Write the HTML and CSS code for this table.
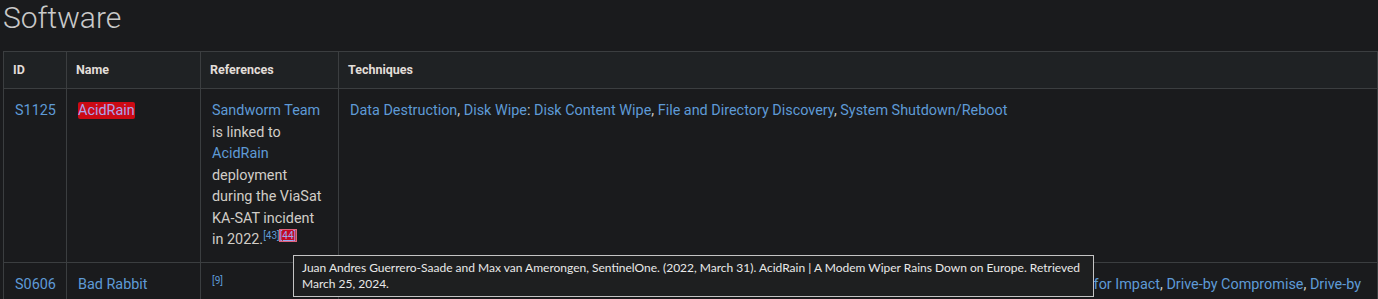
FILE: index.html
```html
<!DOCTYPE html>
<html lang="en">
<head>
<meta charset="utf-8">
<title>Software</title>
<link rel="stylesheet" href="styles.css">
</head>
<body>
<div class="page">
  <h2 class="section-title">Software</h2>
  <table class="software">
    <colgroup>
      <col class="c-id">
      <col class="c-name">
      <col class="c-refs">
      <col class="c-tech">
    </colgroup>
    <thead>
      <tr>
        <th>ID</th>
        <th>Name</th>
        <th>References</th>
        <th>Techniques</th>
      </tr>
    </thead>
    <tbody>
      <tr>
        <td><a href="#">S1125</a></td>
        <td><a href="#" class="hl">AcidRain</a></td>
        <td><a href="#">Sandworm Team</a> is linked to <a href="#">AcidRain</a> deployment during the ViaSat KA-SAT incident in 2022.<sup><a href="#">[43]</a></sup><sup><a href="#" class="ref-hl">[44]</a></sup></td>
        <td><a href="#">Data Destruction</a>, <a href="#">Disk Wipe</a>: <a href="#">Disk Content Wipe</a>, <a href="#">File and Directory Discovery</a>, <a href="#">System Shutdown/Reboot</a></td>
      </tr>
      <tr>
        <td><a href="#">S0606</a></td>
        <td><a href="#">Bad Rabbit</a></td>
        <td><sup><a href="#">[9]</a></sup></td>
        <td><a href="#">Boot or Logon Autostart Execution</a>, <a href="#">Brute Force</a>: <a href="#">Password Spraying</a>, <a href="#">Data Destruction</a>, <a href="#">Input Capture</a>, <a href="#">Data Encrypted for Impact</a>, <a href="#">Drive-by Compromise</a>, <a href="#">Drive-by Compromise</a>, <a href="#">Exploitation of Remote Services</a>, <a href="#">Lateral Tool Transfer</a></td>
      </tr>
    </tbody>
  </table>
  <div class="tooltip">Juan Andres Guerrero-Saade and Max van Amerongen, SentinelOne. (2022, March 31). AcidRain | A Modem Wiper Rains Down on Europe. Retrieved March 25, 2024.</div>
</div>
</body>
</html>
```

FILE: styles.css
```css
html, body {
  margin: 0;
  padding: 0;
  background: #1a1b1d;
}

body {
  font-family: Roboto, "Liberation Sans", sans-serif;
  color: #d1cdc7;
  overflow: hidden;
}

.page {
  position: relative;
  padding: 0 0 0 3px;
}

.section-title {
  margin: 0 0 15px 0;
  font-size: 30px;
  line-height: 36px;
  font-weight: 300;
  color: #c9c9c9;
}

.software {
  width: 1375px;
  border-collapse: collapse;
  table-layout: fixed;
  font-size: 14.4px;
  line-height: 21.5px;
}

.c-id { width: 63px; }
.c-name { width: 134px; }
.c-refs { width: 138px; }

.software th,
.software td {
  border: 1px solid #3b3e40;
  text-align: left;
  vertical-align: top;
}

.software th {
  background: #1f2224;
  padding: 9px 9px;
  font-size: 12.5px;
  line-height: 18px;
  font-weight: 700;
  color: #e2ded9;
}

.software td {
  padding: 11px 12px 11px 11px;
}

.software a {
  color: #5e9ad6;
  text-decoration: none;
}

.software a.hl {
  background: #cc0a14;
  color: #aea4ec;
  border-radius: 2px;
}

.software sup {
  font-size: 10px;
  line-height: 0;
  vertical-align: 5px;
}

.software a.ref-hl {
  background: #c40a22;
  color: #9aa8f0;
  text-decoration: underline;
  outline: 1px solid #e2607a;
}

.tooltip {
  position: absolute;
  left: 293px;
  top: 255px;
  width: 783px;
  padding: 4px 8px;
  background: #1e1f20;
  border: 1px solid #c4c4c4;
  color: #e9e9e9;
  font-family: Lato, "Liberation Sans", sans-serif;
  font-size: 12px;
  line-height: 16px;
}
```
